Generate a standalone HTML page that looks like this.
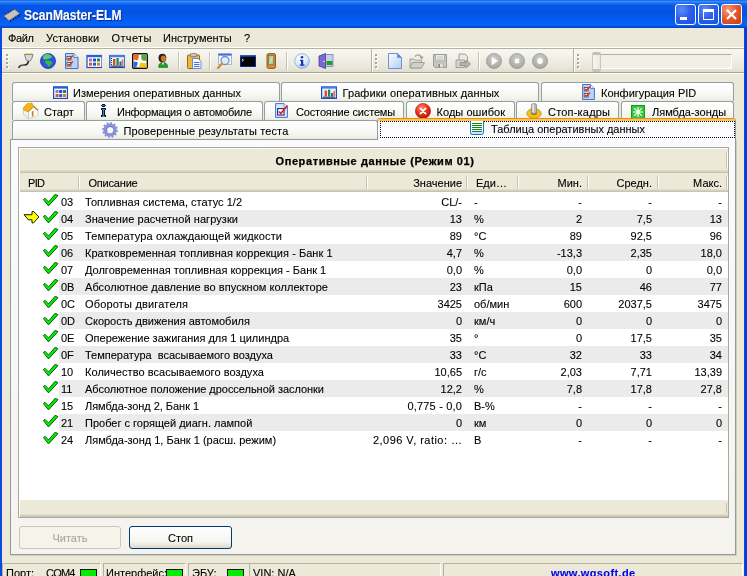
<!DOCTYPE html>
<html><head><meta charset="utf-8"><title>ScanMaster-ELM</title>
<style>
html,body{margin:0;padding:0;}
body{width:747px;height:576px;overflow:hidden;background:#ece9d8;font-family:"Liberation Sans",sans-serif;font-size:11px;color:#000;position:relative;line-height:13px;-webkit-text-stroke-width:0.1px;}
.abs{position:absolute;}
span,div{white-space:nowrap;}
#title{left:0;top:0;width:747px;height:28px;background:linear-gradient(180deg,#0a60e8 0%,#3a8cf8 5%,#1a70f0 11%,#0656e8 20%,#0452e4 45%,#0660f4 80%,#0664f8 90%,#0552dc 94%,#0340c8 100%);}
#title .cap{left:24px;top:7px;color:#fff;font-weight:bold;font-size:14px;transform:scaleX(0.865);transform-origin:0 0;text-shadow:1px 1px 0 #0a2a80;line-height:16px;}
.tb{position:absolute;top:4px;width:19px;height:19px;border:1px solid #fff;border-radius:3px;background:radial-gradient(circle at 30% 25%,#5c8ef8 0%,#2c60ee 45%,#1e4ede 100%);}
.tb.close{background:radial-gradient(circle at 30% 25%,#f0a080 0%,#e45a30 45%,#c83a14 100%);}
#lb{left:0;top:28px;width:2px;height:548px;background:#0a4ae0;}
#rb{left:744px;top:28px;width:3px;height:548px;background:linear-gradient(90deg,#0a4ae0,#0838c8);}
#menu{left:2px;top:28px;width:742px;height:19px;}
#menu span{position:absolute;top:4px;}
.hl{position:absolute;height:1px;left:2px;width:742px;}
.grip{position:absolute;width:2px;height:2px;background:#a9a594;box-shadow:1px 1px 0 #fff;}
.ico{position:absolute;width:16px;height:16px;}
.sep{position:absolute;width:1px;height:18px;background:#c5c2b2;box-shadow:1px 0 0 #fff;}
.tab{position:absolute;height:19px;box-sizing:border-box;border:1px solid #919fa8;border-bottom:none;border-radius:3px 3px 0 0;background:linear-gradient(#ffffff 0%,#fbfbf9 40%,#f3f3ec 85%,#ebe9dc 100%);}
.tab span{position:absolute;top:4px;}
.tab svg{position:absolute;top:1px;}
#page{left:10px;top:139px;width:726px;height:416px;box-sizing:border-box;border:1px solid #919b9c;background:linear-gradient(#fbfbfd,#f4f3ee);box-shadow:1px 1px 0 #d0cebf;}
#seltab{left:377px;top:118px;width:359px;height:22px;box-sizing:border-box;border:1px solid #919b9c;border-bottom:none;border-top:none;border-radius:3px 3px 0 0;background:#fcfcfe;overflow:hidden;}
#seltab .or1{position:absolute;left:0;top:0;width:100%;height:1px;background:#e68b2c;}
#seltab .or2{position:absolute;left:0;top:1px;width:100%;height:2px;background:#ffc73c;}
#seltab .focus{position:absolute;left:2px;top:3px;width:353px;height:15px;border:1px dotted #000;}
#panel{left:18px;top:147px;width:711px;height:371px;box-sizing:border-box;border:1px solid #aca899;background:#fff;}
#phead{left:1px;top:1px;width:708px;height:24px;background:linear-gradient(#ece9d8 0,#ece9d8 21px,#e0ddcc 21px,#e0ddcc 22px,#d4d0be 22px,#d4d0be 23px,#c8c4b2 23px);padding-left:2px;box-sizing:border-box;-webkit-text-stroke-width:0.25px;text-align:center;font-weight:bold;line-height:24px;letter-spacing:0.6px;}
#chead{left:1px;top:25px;width:708px;height:19px;background:linear-gradient(#ece9d8 0,#ece9d8 16px,#e0ddcc 16px,#e0ddcc 17px,#d4d0be 17px,#d4d0be 18px,#c8c4b2 18px);}
#chead span{position:absolute;top:4px;}
#chead i{position:absolute;top:3px;width:1px;height:13px;background:#c5c2b2;box-shadow:1px 0 0 #fff;}
#pfoot{left:1px;top:352px;width:708px;height:17px;background:linear-gradient(#ece9d8 0,#ece9d8 14px,#e0ddcc 14px,#e0ddcc 15px,#d4d0be 15px,#d4d0be 16px,#c8c4b2 16px);}
.row{position:absolute;left:19px;width:709px;height:17px;}
.row.alt:before{content:"";position:absolute;left:40px;top:0;width:669px;height:17px;background:#ebebeb;}
.row .c{position:absolute;top:3px;white-space:pre;}
.row .ck{position:absolute;left:24px;top:1px;}
.row .ar{position:absolute;left:4px;top:1px;}
.pid{left:42px}.desc{left:66px}.val{right:266px}.unit{left:455px}.mn{right:146px}.av{right:76px}.mx{right:6px}
.btn{position:absolute;top:526px;height:23px;box-sizing:border-box;border-radius:3px;text-align:center;line-height:23px;}
#statusbar{left:2px;top:563px;width:742px;height:13px;}
.sp{position:absolute;top:0px;height:14px;border-left:1px solid #b4b1a0;border-top:1px solid #b4b1a0;border-right:1px solid #fff;box-sizing:border-box;}
.sp span{position:absolute;top:3px;}
.led{position:absolute;top:5px;width:17px;border-color:#111 !important;height:10px;background:#00ee00;border:1px solid #333;box-sizing:border-box;}
#w{position:absolute;left:0;top:0;width:747px;height:576px;will-change:transform;}

</style></head><body><div id="w">
<div id="title" class="abs"><svg class="abs" style="left:3px;top:8px" width="18" height="15" viewBox="0 0 18 15"><path d="M1.5 8.5 L3 10.5 M4 10 L5.5 12 M6.5 11 L8 13.5 M9.5 10 L11 12 M12 8.5 L13.5 10.5 M14.5 7 L16 9 M16 5.5 L17 7" stroke="#111" stroke-width="1.2"/><path d="M3 6.5v-1.5M5.5 5v-1.5M8 3.5v-1.5M10.5 2v-1.2" stroke="#222" stroke-width="1"/><path d="M1 8 L11.5 1.5 L16.5 5.5 L6 12.5 Z" fill="#c4c4c4" stroke="#8a8878" stroke-width="0.8"/></svg><div class="cap abs">ScanMaster-ELM</div>
<div class="tb" style="left:675px"><svg width="19" height="19"><rect x="4" y="12" width="7" height="3" fill="#fff"/></svg></div>
<div class="tb" style="left:698px"><svg width="19" height="19"><rect x="4.5" y="5.5" width="10" height="9" fill="none" stroke="#fff"/><rect x="4" y="4" width="11" height="3" fill="#fff"/></svg></div>
<div class="tb close" style="left:721px"><svg width="19" height="19"><path d="M5 5 L14 14 M14 5 L5 14" stroke="#fff" stroke-width="2.2"/></svg></div>
</div>
<div id="lb" class="abs"></div><div id="rb" class="abs"></div>
<div id="menu" class="abs"><span style="left:6px;letter-spacing:-0.35px">Файл</span><span style="left:44px;letter-spacing:0.17px">Установки</span><span style="left:109.5px;letter-spacing:0.36px">Отчеты</span><span style="left:161px">Инструменты</span><span style="left:242px">?</span></div>
<div class="hl" style="top:47px;background:#fff"></div><div class="hl" style="top:48px;background:#b4b1a0"></div>
<div class="abs" style="left:2px;top:49px;width:742px;height:23px;background:linear-gradient(#f8f7f2 0%,#f1f0e8 40%,#e9e7da 80%,#e0ddcc 100%)"></div>
<div class="hl" style="top:72px;background:#a8a594"></div><div class="hl" style="top:73px;background:#fff"></div>
<div id="toolbar">
<div class="grip" style="left:6px;top:54px"></div><div class="grip" style="left:6px;top:58px"></div><div class="grip" style="left:6px;top:62px"></div><div class="grip" style="left:6px;top:66px"></div>
<svg class="ico" style="left:18px;top:53px" viewBox="0 0 16 16"><path d="M1 15 C1 11.5 4 12.5 7 12 C10 11.5 10.5 9.5 10.5 7" fill="none" stroke="#222" stroke-width="1.6"/><path d="M1.6 14.4 C2 12 4 12.8 7 12.4" fill="none" stroke="#999" stroke-width="0.6"/><path d="M6.5 1.5 H15 L13.5 6.5 L12 8 H9.5 L8 6.5 Z" fill="#d9d9d9" stroke="#666" stroke-width="0.8"/><path d="M7 0.6 H14.5" stroke="#e8d020" stroke-width="1.2" stroke-dasharray="1.2 0.8"/></svg>
<svg class="ico" style="left:40px;top:53px" viewBox="0 0 16 16"><circle cx="8" cy="8" r="7.5" fill="#2a55e0" stroke="#1a2f9a" stroke-width="0.8"/><path d="M3 4 C5 1.5 9 1 11.5 2.5 C12.5 4 11 5.5 9.5 5.5 C8 5.5 7 7 5 6.5 C3.5 6.3 2.5 5.5 3 4 Z" fill="#5fcf55"/><path d="M5 8 C7 7 10.5 7.5 12 9 C12.5 11 10.5 11.5 9.5 13.5 C8 14 7.5 12 6.5 11 C5.5 10 4 9.5 5 8 Z" fill="#3fb93a"/><path d="M3 3.5 A6.5 6.5 0 0 1 9 1.2" fill="none" stroke="#9bb8ff" stroke-width="0.8"/></svg>
<svg class="ico" style="left:64px;top:53px" viewBox="0 0 16 16"><path d="M1.5 0.5 H10 L14 4.5 V15.5 H1.5 Z" fill="#b8d4f8" stroke="#4a6fc0" stroke-width="1"/><path d="M10 0.5 V4.5 H14" fill="#e8f0ff" stroke="#4a6fc0" stroke-width="0.8"/><rect x="3" y="3.5" width="4" height="3.5" fill="#fff" stroke="#444" stroke-width="0.8"/><rect x="3" y="9.5" width="4" height="3.5" fill="#fff" stroke="#444" stroke-width="0.8"/><path d="M3.8 5 L5 6.3 L9 2.5 M3.8 11 L5 12.3 L9 8.5" fill="none" stroke="#e03010" stroke-width="1.4"/></svg>
<svg class="ico" style="left:86px;top:53px" viewBox="0 0 16 16"><rect x="1" y="2.5" width="15" height="12" fill="#fff" stroke="#1a48c8" stroke-width="1.2"/><rect x="1" y="2" width="15" height="2.2" fill="#2a5ce0"/><rect x="3" y="5.5" width="3" height="3" fill="#8a7ad0"/><rect x="7" y="5.5" width="3" height="3" fill="#2848b8"/><rect x="11" y="5.5" width="3" height="3" fill="#208838"/><rect x="3" y="9.7" width="3" height="3" fill="#e85020"/><rect x="7" y="9.7" width="3" height="3" fill="#2858c8"/><rect x="11" y="9.7" width="3" height="3" fill="#d08018"/></svg>
<svg class="ico" style="left:109px;top:53px" viewBox="0 0 16 16"><rect x="0.8" y="2.5" width="15" height="12" fill="#e8f0ff" stroke="#1a48c8" stroke-width="1.2"/><rect x="0.8" y="2" width="15" height="2.2" fill="#4a7ae8"/><rect x="2" y="12.5" width="12.5" height="1.4" fill="#556"/><rect x="4" y="6" width="2.4" height="6.5" fill="#d85020"/><rect x="7.5" y="5" width="2.2" height="7.5" fill="#208840"/><rect x="10.5" y="8.5" width="2" height="4" fill="#2858c8"/><rect x="12.8" y="6.5" width="1.6" height="6" fill="#e07838"/><path d="M2.5 5 V13" stroke="#334" stroke-width="1" stroke-dasharray="1 1"/></svg>
<svg class="ico" style="left:132px;top:53px" viewBox="0 0 16 16"><rect x="0.7" y="0.7" width="14.6" height="14.6" rx="1.2" fill="#fff" stroke="#111" stroke-width="1.4"/><path d="M1.5 1.5 H7 C6.5 4 6.8 5.5 5.5 7.5 L1.5 6.5 Z" fill="#e86a20"/><path d="M9.5 1.5 H14.5 V7.5 C12.5 7.8 11 8 9.5 6.5 C9 4.5 9.2 3 9.5 1.5 Z" fill="#58a838"/><path d="M1.5 8.5 L5.5 9 C6 11 5 13 4 14.5 H1.5 Z" fill="#3868d8"/><path d="M8 10 C10 9.5 12.5 10.5 14.5 10.5 V14.5 H7 C7.5 13 7.5 11.5 8 10 Z" fill="#f0c818"/></svg>
<svg class="ico" style="left:155px;top:53px" viewBox="0 0 16 16"><path d="M3.8 14.4 C3.2 11 5.5 9.6 8 9.6 C10.5 9.6 13 11 12.6 14.4 Z" fill="#1fa030" stroke="#0c6a1c" stroke-width="0.6"/><path d="M6.8 9.8 L8 12.2 L9.2 9.8 Z" fill="#e8f0e8"/><ellipse cx="7.4" cy="5" rx="3.9" ry="4.2" fill="#2a2018"/><ellipse cx="8.4" cy="5.6" rx="2.5" ry="3.1" fill="#d07a28"/></svg>
<div class="sep" style="left:178px;top:52px"></div>
<svg class="ico" style="left:186px;top:53px" viewBox="0 0 16 16"><rect x="1.5" y="2" width="12" height="13.5" rx="1" fill="#e8b840" stroke="#9a6a10" stroke-width="1"/><rect x="4.5" y="0.6" width="6" height="3" rx="0.8" fill="#c8c8d0" stroke="#666" stroke-width="0.7"/><path d="M6.5 5.5 H12 L15 8.2 V15.5 H6.5 Z" fill="#f4f8ff" stroke="#5a78b8" stroke-width="0.8"/><path d="M8 9.5 H13.5 M8 11.5 H13.5 M8 13.5 H13.5" stroke="#3a78e0" stroke-width="1"/></svg>
<div class="sep" style="left:209px;top:52px"></div>
<svg class="ico" style="left:216px;top:53px" viewBox="0 0 16 16"><rect x="2.5" y="1" width="13" height="10.5" fill="#f4f8ff" stroke="#88a8e0" stroke-width="0.8"/><rect x="2.5" y="0.6" width="13" height="2" fill="#3a6ae0"/><circle cx="9" cy="7.5" r="4" fill="#d8ecf8" fill-opacity="0.9" stroke="#7890a8" stroke-width="1.3"/><path d="M6 10.5 L2 15" stroke="#d88828" stroke-width="2.2" stroke-linecap="round"/></svg>
<svg class="abs" style="left:240px;top:55px" width="16" height="12" viewBox="0 0 16 12"><rect x="0.5" y="0.5" width="15" height="11" fill="#050505" stroke="#0a2a90" stroke-width="1"/><rect x="0" y="0" width="16" height="1.6" fill="#2a58d8"/><path d="M2 4 L3.5 5.2 L2 6.4" fill="none" stroke="#fff" stroke-width="0.9"/></svg>
<svg class="ico" style="left:263px;top:53px" viewBox="0 0 16 16"><rect x="4" y="0.6" width="8.5" height="14.8" rx="1.6" fill="#d88a30" stroke="#8a5010" stroke-width="0.9"/><rect x="5.6" y="2.6" width="5.2" height="9" fill="#a8d0a0" stroke="#6a5a30" stroke-width="0.5"/><path d="M7 10 L9.5 4" stroke="#e8f4e0" stroke-width="0.8"/></svg>
<div class="sep" style="left:286px;top:52px"></div>
<svg class="ico" style="left:294px;top:53px" viewBox="0 0 16 16"><defs><radialGradient id="gi" cx="0.4" cy="0.3" r="0.8"><stop offset="0" stop-color="#ffffff"/><stop offset="0.6" stop-color="#d8e8fc"/><stop offset="1" stop-color="#8ab0e8"/></radialGradient></defs><circle cx="8" cy="8" r="7.3" fill="url(#gi)" stroke="#8aa8d8" stroke-width="0.8"/><circle cx="8" cy="4.2" r="1.3" fill="#1030b0"/><path d="M6 6.8 H9.2 V11.6 H10.4 V12.8 H5.8 V11.6 H7 V8 H6 Z" fill="#1030b0"/></svg>
<svg class="ico" style="left:318px;top:53px" viewBox="0 0 16 16"><rect x="6" y="1.5" width="9" height="12" fill="#c8d0e0" stroke="#7a80c0" stroke-width="0.8"/><rect x="8.5" y="8" width="6" height="4" fill="#18a028"/><path d="M1 3 L7.5 0.5 V15.5 L1 13 Z" fill="#7a6ad0" stroke="#4a3aa0" stroke-width="0.8"/><circle cx="6" cy="8.5" r="0.8" fill="#e8e0ff"/></svg>
<!-- second toolbar -->
<div class="abs" style="left:371px;top:49px;width:1px;height:23px;background:#b4b1a0"></div><div class="abs" style="left:372px;top:49px;width:1px;height:23px;background:#fff"></div>
<div class="grip" style="left:375px;top:54px"></div><div class="grip" style="left:375px;top:58px"></div><div class="grip" style="left:375px;top:62px"></div><div class="grip" style="left:375px;top:66px"></div>
<svg class="ico" style="left:387px;top:53px" viewBox="0 0 16 16"><defs><linearGradient id="gd" x1="0" y1="0" x2="1" y2="1"><stop offset="0" stop-color="#ffffff"/><stop offset="1" stop-color="#a4d0f8"/></linearGradient></defs><path d="M1.5 0.5 H10.5 L14.5 4.5 V15.5 H1.5 Z" fill="url(#gd)" stroke="#8088d0" stroke-width="1"/><path d="M10.5 0.5 V4.5 H14.5 Z" fill="#5a88e8" stroke="#6a80d0" stroke-width="0.6"/></svg>
<svg class="ico" style="left:409px;top:53px" viewBox="0 0 16 16"><path d="M1 6 H5 L6 7.2 H12.5 V15 H1 Z" fill="#dcdcd8" stroke="#9a9a92" stroke-width="0.9"/><path d="M1 15 L3.5 9.5 H15.5 L12.5 15 Z" fill="#d0d0cc" stroke="#9a9a92" stroke-width="0.9"/><path d="M6 3.5 C8 1 11.5 1.5 12.5 4.5" fill="none" stroke="#a4a49c" stroke-width="1.4"/><path d="M10.5 4.2 L13 6.8 L14.6 3.2 Z" fill="#a4a49c"/></svg>
<svg class="ico" style="left:432px;top:53px" viewBox="0 0 16 16"><path d="M1.5 1.5 H14.5 V14.5 H3 L1.5 13 Z" fill="#c8c8c4" stroke="#9a9a92" stroke-width="1"/><rect x="3.8" y="1.8" width="8.4" height="6" fill="#f0f0ee" stroke="#909088" stroke-width="0.5"/><path d="M5 4 H11 M5 6 H11" stroke="#b0b0a8" stroke-width="0.8"/><rect x="4.8" y="10" width="6.4" height="4.5" fill="#e0e0dc" stroke="#9a9a92" stroke-width="0.5"/><rect x="6" y="11" width="2" height="3.4" fill="#909088"/></svg>
<svg class="ico" style="left:455px;top:53px" viewBox="0 0 16 16"><path d="M4 1 H10 L12.5 3.5 V9 H4 Z" fill="#e8e8e4" stroke="#9a9a92" stroke-width="0.9"/><path d="M1 7 H9.5 V14.5 H1 Z" fill="#d4d4d0" stroke="#9a9a92" stroke-width="0.9"/><path d="M5 9.5 H11 V7 L15.5 11 L11 15 V12.5 H5 Z" fill="#b4b4b0" stroke="#8a8a84" stroke-width="0.8"/></svg>
<div class="sep" style="left:478px;top:52px"></div>
<svg class="ico" style="left:486px;top:53px" viewBox="0 0 16 16"><defs><radialGradient id="gg" cx="0.5" cy="0.35" r="0.75"><stop offset="0" stop-color="#d0d0cc"/><stop offset="0.7" stop-color="#acaca8"/><stop offset="1" stop-color="#90908c"/></radialGradient></defs><circle cx="8" cy="8" r="7.6" fill="url(#gg)" stroke="#9a9a94" stroke-width="0.7"/><path d="M5.6 3.6 L12 8 L5.6 12.4 Z" fill="#fafaf8"/></svg>
<svg class="ico" style="left:509px;top:53px" viewBox="0 0 16 16"><circle cx="8" cy="8" r="7.6" fill="url(#gg)" stroke="#9a9a94" stroke-width="0.7"/><rect x="5.8" y="5.8" width="4.4" height="4.4" rx="0.5" fill="#fafaf8"/></svg>
<svg class="ico" style="left:532px;top:53px" viewBox="0 0 16 16"><circle cx="8" cy="8" r="7.6" fill="url(#gg)" stroke="#9a9a94" stroke-width="0.7"/><circle cx="8" cy="8" r="2.9" fill="#fafaf8"/></svg>
<!-- third toolbar -->
<div class="abs" style="left:573px;top:49px;width:1px;height:23px;background:#b4b1a0"></div><div class="abs" style="left:574px;top:49px;width:1px;height:23px;background:#fff"></div>
<div class="grip" style="left:577px;top:54px"></div><div class="grip" style="left:577px;top:58px"></div><div class="grip" style="left:577px;top:62px"></div><div class="grip" style="left:577px;top:66px"></div>
<div class="abs" style="left:596px;top:54px;width:136px;height:15px;box-sizing:border-box;background:#f1f0e7;border:1px solid #b4b1a2;border-right-color:#fff;border-bottom-color:#fff;"></div>
<div class="abs" style="left:592px;top:52px;width:9px;height:20px;box-sizing:border-box;background:linear-gradient(90deg,#f8f7f0,#ebe9de);border:1px solid #c9c7b8;border-top:3px solid #c4c3b3;border-bottom:3px solid #c4c3b3;border-radius:2px;"></div>

</div>
<!-- tabs row 1 -->
<div class="tab" style="left:12px;top:82px;width:268px"><span style="left:60px">Измерения оперативных данных</span></div>
<div class="tab" style="left:281px;top:82px;width:258px"><span style="left:60.5px;letter-spacing:0.09px">Графики оперативных данных</span></div>
<div class="tab" style="left:541px;top:82px;width:193px"><span style="left:59px">Конфигурация PID</span></div>
<!-- row 2 -->
<div class="tab" style="left:12px;top:101px;width:73px"><span style="left:31px">Старт</span></div>
<div class="tab" style="left:86px;top:101px;width:177px"><span style="left:30px;letter-spacing:-0.27px">Информация о автомобиле</span></div>
<div class="tab" style="left:264px;top:101px;width:140px"><span style="left:31px;letter-spacing:-0.15px">Состояние системы</span></div>
<div class="tab" style="left:406px;top:101px;width:109px"><span style="left:29.5px;letter-spacing:0.05px">Коды ошибок</span></div>
<div class="tab" style="left:516px;top:101px;width:103px"><span style="left:31px;letter-spacing:0.2px">Стоп-кадры</span></div>
<div class="tab" style="left:621px;top:101px;width:113px"><span style="left:30px">Лямбда-зонды</span></div>
<!-- row 3 -->
<div class="tab" style="left:12px;top:120px;width:366px"><span style="left:110.5px;letter-spacing:0.13px">Проверенные результаты теста</span></div>
<svg class="abs" style="left:53px;top:86px" width="15" height="13" viewBox="0 0 15 13"><rect x="0.6" y="1" width="13.8" height="11.4" fill="#fff" stroke="#1a48c8" stroke-width="1.2"/><rect x="0.6" y="0.4" width="13.8" height="2.2" fill="#2a5ce0"/><rect x="2.5" y="4" width="3" height="3" fill="#8a7ad0"/><rect x="6.2" y="4" width="3" height="3" fill="#2848b8"/><rect x="10" y="4" width="3" height="3" fill="#208838"/><rect x="2.5" y="8" width="3" height="3" fill="#e85020"/><rect x="6.2" y="8" width="3" height="3" fill="#2858c8"/><rect x="10" y="8" width="3" height="3" fill="#d08018"/></svg><svg class="abs" style="left:321px;top:86px" width="16" height="13" viewBox="0 0 16 13"><rect x="0.6" y="1" width="14.8" height="11.4" fill="#e8f0ff" stroke="#1a48c8" stroke-width="1.2"/><rect x="0.6" y="0.4" width="14.8" height="2.2" fill="#4a7ae8"/><rect x="2" y="10.6" width="12" height="1.3" fill="#556"/><rect x="3.6" y="4.5" width="2.4" height="6" fill="#d85020"/><rect x="7" y="3.6" width="2.2" height="7" fill="#208840"/><rect x="10" y="7" width="2" height="3.6" fill="#2858c8"/><rect x="12.4" y="5" width="1.6" height="5.6" fill="#e07838"/></svg><svg class="abs" style="left:582px;top:84px" width="13" height="16" viewBox="0 0 13 16"><path d="M0.6 0.5 H8.5 L12.4 4.5 V15.5 H0.6 Z" fill="#b8d4f8" stroke="#4a6fc0" stroke-width="1"/><path d="M8.5 0.5 V4.5 H12.4" fill="#e8f0ff" stroke="#4a6fc0" stroke-width="0.8"/><rect x="2.2" y="3.5" width="4" height="3.5" fill="#fff" stroke="#444" stroke-width="0.8"/><rect x="2.2" y="9.5" width="4" height="3.5" fill="#fff" stroke="#444" stroke-width="0.8"/><path d="M3 5 L4.2 6.3 L8.2 2.5 M3 11 L4.2 12.3 L8.2 8.5" fill="none" stroke="#e03010" stroke-width="1.4"/></svg><svg class="abs" style="left:22px;top:102px" width="17" height="18" viewBox="0 0 17 18"><path d="M1.5 7.6 L6.6 9.5 L6.9 16.6 L1.5 12.6 Z" fill="#f2f0e8" stroke="#c4c0b0" stroke-width="0.7"/><path d="M6.6 9.5 L11.7 4.6 L15.8 8.2 L15.8 13.5 L6.9 16.6 Z" fill="#ffffff" stroke="#c4c0b0" stroke-width="0.7"/><path d="M9.8 9.6 L11.8 9 L11.8 13.9 L9.8 14.7 Z" fill="#b87818"/><path d="M10.9 9.8 L11.8 9.5 L11.8 13.9 L10.9 14.2 Z" fill="#e8d8b0"/><path d="M1.2 6 L5.5 1.2 L6.9 1.2 L7.7 2 L8.7 0.9 L10.1 1.2 L11.7 4.4 L6.6 9.6 L5.5 9.6 L1.5 7.7 Z" fill="#f2b210" stroke="#c88a10" stroke-width="0.6"/><path d="M11.7 4.4 L16.2 8.2" stroke="#b87818" stroke-width="1.3"/><path d="M11.7 4.4 L6.6 9.6" stroke="#c88a10" stroke-width="0.8"/></svg><svg class="abs" style="left:101px;top:104px" width="5" height="13" viewBox="0 0 5 13" shape-rendering="crispEdges"><rect x="1" y="0" width="3" height="3" fill="#111"/><rect x="0" y="1" width="5" height="1" fill="#111"/><rect x="1" y="1" width="3" height="1" fill="#1a8cff"/><rect x="0" y="4" width="5" height="2" fill="#111"/><rect x="1" y="5" width="3" height="7" fill="#111"/><rect x="0" y="11" width="5" height="2" fill="#111"/><rect x="2" y="5" width="1" height="7" fill="#1a8cff"/><rect x="1" y="4.5" width="3" height="1" fill="#1a8cff"/><rect x="1" y="11.5" width="3" height="1" fill="#1a8cff"/></svg><svg class="abs" style="left:275px;top:103px" width="15" height="15" viewBox="0 0 15 15"><path d="M0.6 0.6 H9 L12.4 4 V14.4 H0.6 Z" fill="#dce8fc" stroke="#4a6fc0" stroke-width="1"/><path d="M9 0.6 V4 H12.4" fill="#fff" stroke="#4a6fc0" stroke-width="0.7"/><rect x="2.6" y="5.6" width="6.4" height="6.4" fill="#fff" stroke="#1a2a90" stroke-width="1.1"/><path d="M4 8.5 L5.8 10.6 L12.5 2.5" fill="none" stroke="#e01818" stroke-width="1.6"/></svg><svg class="abs" style="left:415px;top:103px" width="16" height="16" viewBox="0 0 16 16"><defs><radialGradient id="ge" cx="0.4" cy="0.3" r="0.8"><stop offset="0" stop-color="#ff8a70"/><stop offset="0.5" stop-color="#e83018"/><stop offset="1" stop-color="#b01000"/></radialGradient></defs><circle cx="8" cy="8" r="7.6" fill="url(#ge)" stroke="#a81808" stroke-width="0.6"/><path d="M5.4 5.4 L10.6 10.6 M10.6 5.4 L5.4 10.6" stroke="#fff" stroke-width="1.9" stroke-linecap="round"/></svg><svg class="abs" style="left:526px;top:102px" width="16" height="17" viewBox="0 0 16 17"><ellipse cx="8" cy="11.5" rx="7.2" ry="4.8" fill="#f4c020" stroke="#c08a10" stroke-width="0.8"/><ellipse cx="8" cy="11.5" rx="3.2" ry="1.8" fill="#b88810"/><rect x="5.4" y="1.6" width="5.2" height="10" rx="2" fill="#b8b8b8" stroke="#787878" stroke-width="0.7"/><rect x="6.4" y="2.4" width="1.6" height="8" fill="#e8e8e8"/></svg><svg class="abs" style="left:631px;top:105px" width="14" height="14" viewBox="0 0 14 14"><rect x="0.5" y="0.5" width="13" height="13" fill="#30c838" stroke="#189a20" stroke-width="1"/><path d="M7 2 V12 M2 7 H12 M3.2 3.2 L10.8 10.8 M10.8 3.2 L3.2 10.8" stroke="#fff" stroke-width="1.2"/></svg><svg class="abs" style="left:102px;top:122px" width="16" height="16" viewBox="0 0 16 16"><circle cx="8" cy="8" r="6.9" fill="none" stroke="#8a92d6" stroke-width="2" stroke-dasharray="1.9 1.713"/><circle cx="8" cy="8" r="4.9" fill="none" stroke="#8a92d6" stroke-width="3.4"/><circle cx="8" cy="8" r="3.4" fill="none" stroke="#5a62a0" stroke-width="0.7" stroke-dasharray="10 30" transform="rotate(150 8 8)"/></svg>
<div id="page" class="abs"></div>
<div id="seltab" class="abs"><div class="or1"></div><div class="or2"></div><div class="focus"></div><span class="abs" style="left:113px;top:5px">Таблица оперативных данных</span></div>
<svg class="abs" style="left:470px;top:121px" width="14" height="14" viewBox="0 0 14 14"><defs><linearGradient id="gt" x1="0" y1="0" x2="0" y2="1"><stop offset="0.6" stop-color="#ffffff"/><stop offset="1" stop-color="#b8d8fc"/></linearGradient></defs><path d="M0.5 0 V11.5 Q0.5 13.5 2.5 13.5 H11.5 Q13.5 13.5 13.5 11.5 V0" fill="url(#gt)" stroke="#1a6ae0" stroke-width="1"/><path d="M2 2.5 H12 M2 4.5 H12 M2 6.5 H12 M2 8.5 H12 M2 10.5 H12" stroke="#0a8c0a" stroke-width="1"/></svg>
<div id="panel" class="abs">
<div id="phead" class="abs">Оперативные данные (Режим 01)<div class="abs" style="left:706px;top:3px;width:1px;height:17px;background:#c5c2b2;box-shadow:1px 0 0 #fff"></div></div>
<div id="chead" class="abs"><span style="left:8px;letter-spacing:-0.7px">PID</span><i style="left:58px"></i><span style="left:68.5px;letter-spacing:-0.2px">Описание</span><i style="left:346px"></i><span style="right:266px">Значение</span><i style="left:446px"></i><span style="left:456px">Еди…</span><i style="left:497px"></i><span style="right:146px">Мин.</span><i style="left:567px"></i><span style="right:76px">Средн.</span><i style="left:637px"></i><span style="right:6px">Макс.</span><i style="left:706px"></i></div>
<div id="pfoot" class="abs"><div class="abs" style="left:706px;top:3px;width:1px;height:10px;background:#c5c2b2"></div></div>
</div>

<div class="row" style="top:193px">
<svg class="ck" viewBox="0 0 16 13" width="16" height="13"><path d="M0.4 5.6 L5.5 11.9 L14.9 1.7 L12.3 0.1 L5.5 8 L2 4.3 Z" fill="#00e600" stroke="#0a400a" stroke-width="0.9" stroke-linejoin="miter"/><path d="M1.6 5.2 L5.5 9.6 L13.2 1.2" fill="none" stroke="#00f000" stroke-width="1.4"/></svg>
<span class="c pid">03</span><span class="c desc" style="letter-spacing:0.029px">Топливная система, статус 1/2</span><span class="c val">CL/-</span><span class="c unit">-</span><span class="c mn">-</span><span class="c av">-</span><span class="c mx">-</span></div>
<div class="row alt" style="top:210px">
<svg class="ar" viewBox="0 0 17 13" width="17" height="13"><path d="M1 3.7 L9 3.7 L9 0.6 L10.8 0.6 L15.9 6 L10.5 11.9 L9 11.9 L9 8.8 L5.4 8.8 Z" fill="#ffff00" stroke="#1a1a00" stroke-width="1" stroke-linejoin="miter"/></svg>
<svg class="ck" viewBox="0 0 16 13" width="16" height="13"><path d="M0.4 5.6 L5.5 11.9 L14.9 1.7 L12.3 0.1 L5.5 8 L2 4.3 Z" fill="#00e600" stroke="#0a400a" stroke-width="0.9" stroke-linejoin="miter"/><path d="M1.6 5.2 L5.5 9.6 L13.2 1.2" fill="none" stroke="#00f000" stroke-width="1.4"/></svg>
<span class="c pid">04</span><span class="c desc" style="letter-spacing:0.073px">Значение расчетной нагрузки</span><span class="c val">13</span><span class="c unit">%</span><span class="c mn">2</span><span class="c av">7,5</span><span class="c mx">13</span></div>
<div class="row" style="top:227px">
<svg class="ck" viewBox="0 0 16 13" width="16" height="13"><path d="M0.4 5.6 L5.5 11.9 L14.9 1.7 L12.3 0.1 L5.5 8 L2 4.3 Z" fill="#00e600" stroke="#0a400a" stroke-width="0.9" stroke-linejoin="miter"/><path d="M1.6 5.2 L5.5 9.6 L13.2 1.2" fill="none" stroke="#00f000" stroke-width="1.4"/></svg>
<span class="c pid">05</span><span class="c desc" style="letter-spacing:0.103px">Температура охлаждающей жидкости</span><span class="c val">89</span><span class="c unit">°C</span><span class="c mn">89</span><span class="c av">92,5</span><span class="c mx">96</span></div>
<div class="row alt" style="top:244px">
<svg class="ck" viewBox="0 0 16 13" width="16" height="13"><path d="M0.4 5.6 L5.5 11.9 L14.9 1.7 L12.3 0.1 L5.5 8 L2 4.3 Z" fill="#00e600" stroke="#0a400a" stroke-width="0.9" stroke-linejoin="miter"/><path d="M1.6 5.2 L5.5 9.6 L13.2 1.2" fill="none" stroke="#00f000" stroke-width="1.4"/></svg>
<span class="c pid">06</span><span class="c desc" style="letter-spacing:0.037px">Кратковременная топливная коррекция - Банк 1</span><span class="c val">4,7</span><span class="c unit">%</span><span class="c mn">-13,3</span><span class="c av">2,35</span><span class="c mx">18,0</span></div>
<div class="row" style="top:261px">
<svg class="ck" viewBox="0 0 16 13" width="16" height="13"><path d="M0.4 5.6 L5.5 11.9 L14.9 1.7 L12.3 0.1 L5.5 8 L2 4.3 Z" fill="#00e600" stroke="#0a400a" stroke-width="0.9" stroke-linejoin="miter"/><path d="M1.6 5.2 L5.5 9.6 L13.2 1.2" fill="none" stroke="#00f000" stroke-width="1.4"/></svg>
<span class="c pid">07</span><span class="c desc">Долговременная топливная коррекция - Банк 1</span><span class="c val">0,0</span><span class="c unit">%</span><span class="c mn">0,0</span><span class="c av">0</span><span class="c mx">0,0</span></div>
<div class="row alt" style="top:278px">
<svg class="ck" viewBox="0 0 16 13" width="16" height="13"><path d="M0.4 5.6 L5.5 11.9 L14.9 1.7 L12.3 0.1 L5.5 8 L2 4.3 Z" fill="#00e600" stroke="#0a400a" stroke-width="0.9" stroke-linejoin="miter"/><path d="M1.6 5.2 L5.5 9.6 L13.2 1.2" fill="none" stroke="#00f000" stroke-width="1.4"/></svg>
<span class="c pid">0B</span><span class="c desc" style="letter-spacing:0.046px">Абсолютное давление во впускном коллекторе</span><span class="c val">23</span><span class="c unit">кПа</span><span class="c mn">15</span><span class="c av">46</span><span class="c mx">77</span></div>
<div class="row" style="top:295px">
<svg class="ck" viewBox="0 0 16 13" width="16" height="13"><path d="M0.4 5.6 L5.5 11.9 L14.9 1.7 L12.3 0.1 L5.5 8 L2 4.3 Z" fill="#00e600" stroke="#0a400a" stroke-width="0.9" stroke-linejoin="miter"/><path d="M1.6 5.2 L5.5 9.6 L13.2 1.2" fill="none" stroke="#00f000" stroke-width="1.4"/></svg>
<span class="c pid">0C</span><span class="c desc" style="letter-spacing:0.181px">Обороты двигателя</span><span class="c val">3425</span><span class="c unit">об/мин</span><span class="c mn">600</span><span class="c av">2037,5</span><span class="c mx">3475</span></div>
<div class="row alt" style="top:312px">
<svg class="ck" viewBox="0 0 16 13" width="16" height="13"><path d="M0.4 5.6 L5.5 11.9 L14.9 1.7 L12.3 0.1 L5.5 8 L2 4.3 Z" fill="#00e600" stroke="#0a400a" stroke-width="0.9" stroke-linejoin="miter"/><path d="M1.6 5.2 L5.5 9.6 L13.2 1.2" fill="none" stroke="#00f000" stroke-width="1.4"/></svg>
<span class="c pid">0D</span><span class="c desc">Скорость движения автомобиля</span><span class="c val">0</span><span class="c unit">км/ч</span><span class="c mn">0</span><span class="c av">0</span><span class="c mx">0</span></div>
<div class="row" style="top:329px">
<svg class="ck" viewBox="0 0 16 13" width="16" height="13"><path d="M0.4 5.6 L5.5 11.9 L14.9 1.7 L12.3 0.1 L5.5 8 L2 4.3 Z" fill="#00e600" stroke="#0a400a" stroke-width="0.9" stroke-linejoin="miter"/><path d="M1.6 5.2 L5.5 9.6 L13.2 1.2" fill="none" stroke="#00f000" stroke-width="1.4"/></svg>
<span class="c pid">0E</span><span class="c desc">Опережение зажигания для 1 цилиндра</span><span class="c val">35</span><span class="c unit">°</span><span class="c mn">0</span><span class="c av">17,5</span><span class="c mx">35</span></div>
<div class="row alt" style="top:346px">
<svg class="ck" viewBox="0 0 16 13" width="16" height="13"><path d="M0.4 5.6 L5.5 11.9 L14.9 1.7 L12.3 0.1 L5.5 8 L2 4.3 Z" fill="#00e600" stroke="#0a400a" stroke-width="0.9" stroke-linejoin="miter"/><path d="M1.6 5.2 L5.5 9.6 L13.2 1.2" fill="none" stroke="#00f000" stroke-width="1.4"/></svg>
<span class="c pid">0F</span><span class="c desc">Температура  всасываемого воздуха</span><span class="c val">33</span><span class="c unit">°C</span><span class="c mn">32</span><span class="c av">33</span><span class="c mx">34</span></div>
<div class="row" style="top:363px">
<svg class="ck" viewBox="0 0 16 13" width="16" height="13"><path d="M0.4 5.6 L5.5 11.9 L14.9 1.7 L12.3 0.1 L5.5 8 L2 4.3 Z" fill="#00e600" stroke="#0a400a" stroke-width="0.9" stroke-linejoin="miter"/><path d="M1.6 5.2 L5.5 9.6 L13.2 1.2" fill="none" stroke="#00f000" stroke-width="1.4"/></svg>
<span class="c pid">10</span><span class="c desc" style="letter-spacing:0.053px">Количество всасываемого воздуха</span><span class="c val">10,65</span><span class="c unit">г/с</span><span class="c mn">2,03</span><span class="c av">7,71</span><span class="c mx">13,39</span></div>
<div class="row alt" style="top:380px">
<svg class="ck" viewBox="0 0 16 13" width="16" height="13"><path d="M0.4 5.6 L5.5 11.9 L14.9 1.7 L12.3 0.1 L5.5 8 L2 4.3 Z" fill="#00e600" stroke="#0a400a" stroke-width="0.9" stroke-linejoin="miter"/><path d="M1.6 5.2 L5.5 9.6 L13.2 1.2" fill="none" stroke="#00f000" stroke-width="1.4"/></svg>
<span class="c pid">11</span><span class="c desc" style="letter-spacing:-0.035px">Абсолютное положение дроссельной заслонки</span><span class="c val">12,2</span><span class="c unit">%</span><span class="c mn">7,8</span><span class="c av">17,8</span><span class="c mx">27,8</span></div>
<div class="row" style="top:397px">
<svg class="ck" viewBox="0 0 16 13" width="16" height="13"><path d="M0.4 5.6 L5.5 11.9 L14.9 1.7 L12.3 0.1 L5.5 8 L2 4.3 Z" fill="#00e600" stroke="#0a400a" stroke-width="0.9" stroke-linejoin="miter"/><path d="M1.6 5.2 L5.5 9.6 L13.2 1.2" fill="none" stroke="#00f000" stroke-width="1.4"/></svg>
<span class="c pid">15</span><span class="c desc" style="letter-spacing:-0.040px">Лямбда-зонд 2, Банк 1</span><span class="c val" style="letter-spacing:0.2px;margin-right:-0.2px">0,775 - 0,0</span><span class="c unit">В-%</span><span class="c mn">-</span><span class="c av">-</span><span class="c mx">-</span></div>
<div class="row alt" style="top:414px">
<svg class="ck" viewBox="0 0 16 13" width="16" height="13"><path d="M0.4 5.6 L5.5 11.9 L14.9 1.7 L12.3 0.1 L5.5 8 L2 4.3 Z" fill="#00e600" stroke="#0a400a" stroke-width="0.9" stroke-linejoin="miter"/><path d="M1.6 5.2 L5.5 9.6 L13.2 1.2" fill="none" stroke="#00f000" stroke-width="1.4"/></svg>
<span class="c pid">21</span><span class="c desc">Пробег с горящей диагн. лампой</span><span class="c val">0</span><span class="c unit">км</span><span class="c mn">0</span><span class="c av">0</span><span class="c mx">0</span></div>
<div class="row" style="top:431px">
<svg class="ck" viewBox="0 0 16 13" width="16" height="13"><path d="M0.4 5.6 L5.5 11.9 L14.9 1.7 L12.3 0.1 L5.5 8 L2 4.3 Z" fill="#00e600" stroke="#0a400a" stroke-width="0.9" stroke-linejoin="miter"/><path d="M1.6 5.2 L5.5 9.6 L13.2 1.2" fill="none" stroke="#00f000" stroke-width="1.4"/></svg>
<span class="c pid">24</span><span class="c desc">Лямбда-зонд 1, Банк 1 (расш. режим)</span><span class="c val" style="letter-spacing:0.47px;margin-right:-0.47px">2,096 V, ratio: …</span><span class="c unit">В</span><span class="c mn">-</span><span class="c av">-</span><span class="c mx">-</span></div>
<div class="btn" style="left:19px;width:102px;border:1px solid #c9c7ba;color:#aca899;background:#f5f4ea">Читать</div>
<div class="btn" style="left:129px;width:103px;border:1px solid #003c74;background:linear-gradient(#ffffff,#f6f5ef 70%,#dcd9ca)">Стоп</div>
<div id="statusbar" class="abs">
<div class="sp" style="left:0px;width:99px"><span style="left:3px">Порт:</span><span style="left:43px;letter-spacing:-0.8px">COM4</span><div class="led" style="left:77px"></div></div>
<div class="sp" style="left:101px;width:83px"><span style="left:2px">Интерфейс:</span><div class="led" style="left:62px"></div></div>
<div class="sp" style="left:186px;width:62px"><span style="left:3px">ЭБУ:</span><div class="led" style="left:38px"></div></div>
<div class="sp" style="left:247px;width:192px"><span style="left:3px">VIN: N/A</span></div>
<div class="sp" style="left:441px;width:300px;text-align:center;color:#0000e6;font-weight:bold"><span style="left:107px;letter-spacing:0.38px">www.wgsoft.de</span></div>
</div>

</div></body></html>
